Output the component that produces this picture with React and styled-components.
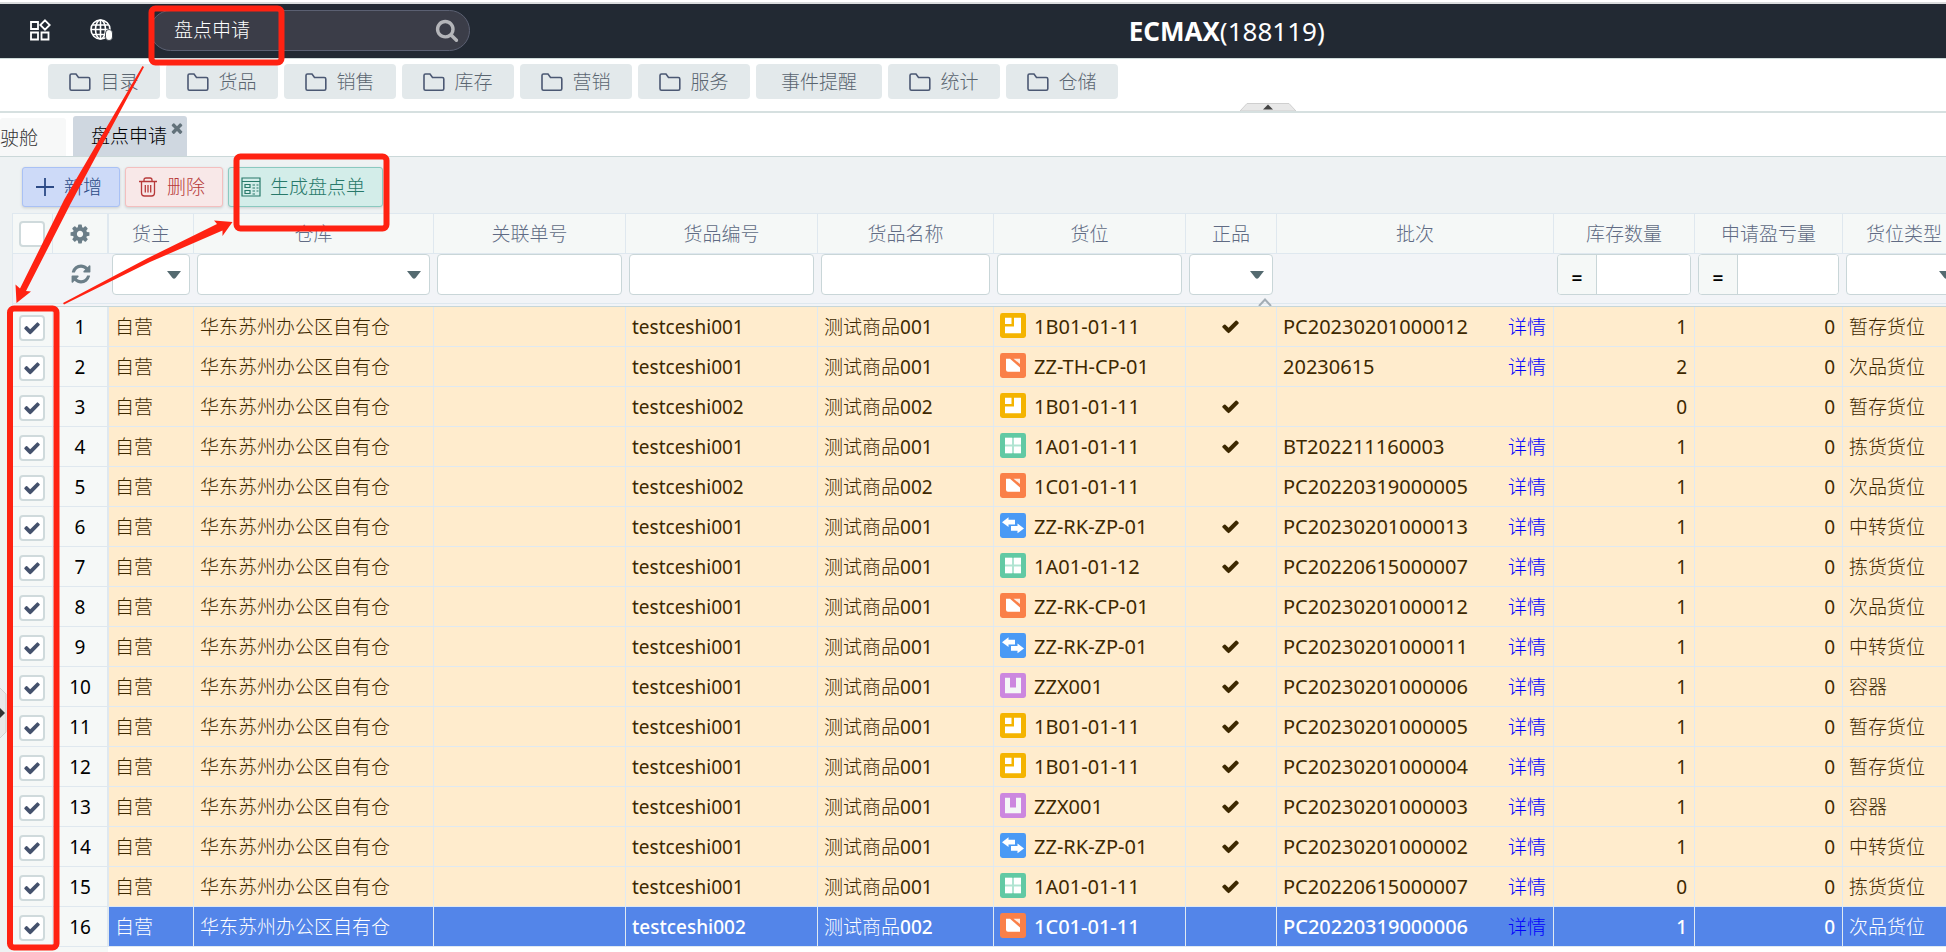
import React, { useState } from "react";
import styled, { createGlobalStyle } from "styled-components";

const paths = {
  check:
    "M1671 566q0 40-28 68l-724 724-136 136q-28 28-68 28t-68-28l-136-136-362-362q-28-28-28-68t28-68l136-136q28-28 68-28t68 28l294 295 656-657q28-28 68-28t68 28l136 136q28 28 28 68z",
  cog: "M1152 896q0-106-75-181t-181-75-181 75-75 181 75 181 181 75 181-75 75-181zm512-109v222q0 12-8 23t-20 13l-185 28q-19 54-39 91 35 50 107 138 10 12 10 25t-9 23q-27 37-99 108t-94 71q-12 0-26-9l-138-108q-44 23-91 38-16 136-29 186-7 28-36 28h-222q-14 0-24.5-8.5t-11.5-21.5l-28-184q-49-16-90-37l-141 107q-10 9-25 9-14 0-25-11-126-114-165-168-7-10-7-23 0-12 8-23 15-21 51-66.5t54-70.5q-27-50-41-99l-183-27q-13-2-21-12.5t-8-23.5v-222q0-12 8-23t19-13l186-28q14-46 39-92-40-57-107-138-10-12-10-24 0-10 9-23 26-36 98.5-107.5t94.5-71.5q13 0 26 10l138 107q44-23 91-38 16-136 29-186 7-28 36-28h222q14 0 24.5 8.5t11.5 21.5l28 184q49 16 90 37l142-107q9-9 24-9 13 0 25 10 129 119 165 170 7 8 7 22 0 12-8 23-15 21-51 66.5t-54 70.5q26 50 41 98l183 28q13 2 21 12.5t8 23.5z",
  refresh:
    "M1639 1056q0 5-1 7-64 268-268 434.5t-478 166.5q-146 0-282.5-55t-243.5-157l-129 129q-19 19-45 19t-45-19-19-45v-448q0-26 19-45t45-19h448q26 0 45 19t19 45-19 45l-137 137q71 66 161 102t187 36q134 0 250-65t186-179q11-17 53-117 8-23 30-23h192q13 0 22.5 9.5t9.5 22.5zm25-800v448q0 26-19 45t-45 19h-448q-26 0-45-19t-19-45 19-45l138-138q-148-137-349-137-134 0-250 65t-186 179q-11 17-53 117-8 23-30 23h-199q-13 0-22.5-9.5t-9.5-22.5v-7q65-268 270-434.5t480-166.5q146 0 284 55.5t245 156.5l130-129q19-19 45-19t45 19 19 45z",
  search:
    "M1216 832q0-185-131.5-316.5t-316.5-131.5-316.5 131.5-131.5 316.5 131.5 316.5 316.5 131.5 316.5-131.5 131.5-316.5zm512 832q0 52-38 90t-90 38q-54 0-90-38l-343-342q-179 124-399 124-143 0-273.5-55.5t-225-150-150-225-55.5-273.5 55.5-273.5 150-225 225-150 273.5-55.5 273.5 55.5 225 150 150 225 55.5 273.5q0 220-124 399l343 343q37 37 37 90z",
  times:
    "M1490 1322q0 40-28 68l-136 136q-28 28-68 28t-68-28l-294-294-294 294q-28 28-68 28t-68-28l-136-136q-28-28-28-68t28-68l294-294-294-294q-28-28-28-68t28-68l136-136q28-28 68-28t68 28l294 294 294-294q28-28 68-28t68 28l136 136q28 28 28 68t-28 68l-294 294 294 294q28 28 28 68z",
};

const Fa = ({ name, size }) => (
  <svg width={size} height={size} viewBox="0 0 1792 1792" fill="currentColor">
    <path d={paths[name]} />
  </svg>
);

const menus = ["目录", "货品", "销售", "库存", "营销", "服务", "事件提醒", "统计", "仓储"];

const columns = [
  { title: "货主", width: 85, filter: "select" },
  { title: "仓库", width: 240, filter: "select" },
  { title: "关联单号", width: 192, filter: "text" },
  { title: "货品编号", width: 192, filter: "text" },
  { title: "货品名称", width: 176, filter: "text" },
  { title: "货位", width: 192, filter: "text" },
  { title: "正品", width: 91, filter: "select", sorted: true },
  { title: "批次", width: 277 },
  { title: "库存数量", width: 141, filter: "number" },
  { title: "申请盈亏量", width: 148, filter: "number" },
  { title: "货位类型", width: 123, filter: "select" },
];

// [item, location, kind, genuine, batch, stock]
const rows = [
  ["001", "1B01-01-11", "temp", true, "PC20230201000012", 1],
  ["001", "ZZ-TH-CP-01", "bad", false, "20230615", 2],
  ["002", "1B01-01-11", "temp", true, "", 0],
  ["001", "1A01-01-11", "pick", true, "BT202211160003", 1],
  ["002", "1C01-01-11", "bad", false, "PC20220319000005", 1],
  ["001", "ZZ-RK-ZP-01", "transfer", true, "PC20230201000013", 1],
  ["001", "1A01-01-12", "pick", true, "PC20220615000007", 1],
  ["001", "ZZ-RK-CP-01", "bad", false, "PC20230201000012", 1],
  ["001", "ZZ-RK-ZP-01", "transfer", true, "PC20230201000011", 1],
  ["001", "ZZX001", "box", true, "PC20230201000006", 1],
  ["001", "1B01-01-11", "temp", true, "PC20230201000005", 1],
  ["001", "1B01-01-11", "temp", true, "PC20230201000004", 1],
  ["001", "ZZX001", "box", true, "PC20230201000003", 1],
  ["001", "ZZ-RK-ZP-01", "transfer", true, "PC20230201000002", 1],
  ["001", "1A01-01-11", "pick", true, "PC20220615000007", 0],
  ["002", "1C01-01-11", "bad", false, "PC20220319000006", 1],
];

const kinds = {
  temp: {
    label: "暂存货位",
    color: "#f4b400",
    shape: <path fill="#fff" d="M5 5h6.500v6.500H5zM14 5h7v16H5v-7h9z" />,
  },
  bad: {
    label: "次品货位",
    color: "#fa8048",
    shape: (
      <>
        <path fill="#fff" d="M6 6h4l10 9v4.500H8q-2 0-2-2z" />
        <path fill="#fff" fillOpacity="0.850" d="M13.500 6H20v5.500z" />
      </>
    ),
  },
  pick: {
    label: "拣货货位",
    color: "#62c9a4",
    shape: (
      <>
        <path fill="#fff" fillOpacity="0.500" d="M5 5h16v16H5z" />
        <path fill="#fff" d="M5 5h7v7H5zM14 5h7v7h-7zM5 14h7v7H5zM14 14h7v7h-7z" />
      </>
    ),
  },
  transfer: {
    label: "中转货位",
    color: "#4a9af5",
    shape: (
      <path
        fill="#fff"
        d="M2 9.500L8.500 4.500V7H15v5H8.500v2.500zM24 16l-6.500 5v-2.500H11v-5h6.500V11z"
      />
    ),
  },
  box: {
    label: "容器",
    color: "#cc87df",
    shape: <path fill="#f5f7f7" d="M5 5h5v10h6V5h5v16H5z" />,
  },
};

const FolderIcon = () => (
  <svg width="22" height="20" viewBox="0 0 22 20" fill="none" stroke="#4b5873" strokeWidth="1.600">
    <path d="M1 3.500Q1 2 2.500 2H7l2.500 3.500h9.800q1.500 0 1.500 1.500v9.800q0 1.500-1.500 1.500H2.500Q1 18.300 1 16.800z" />
  </svg>
);

const GridIcon = () => (
  <svg width="24" height="22" viewBox="0 0 24 22" fill="none" stroke="#fff" strokeWidth="1.800">
    <path d="M3 3h7v7H3zM3 13.500h7v7H3zM13.500 13.500h7v7h-7zM17 1.300l4.700 4.700-4.700 4.700L12.300 6z" />
  </svg>
);

const GlobeIcon = () => (
  <svg width="24" height="24" viewBox="0 0 24 24" fill="none" stroke="#fff" strokeWidth="1.600">
    <circle cx="11.500" cy="11.500" r="9.500" />
    <ellipse cx="11.500" cy="11.500" rx="5" ry="9.500" />
    <path d="M11.500 2v19M2 11.500h19M3.500 7h16M3.500 16.500h13" />
    <rect x="16.500" y="11.500" width="7" height="11" rx="3.500" fill="#fff" stroke="#222933" strokeWidth="0.800" />
  </svg>
);

const PlusIcon = () => (
  <svg width="20" height="20" viewBox="0 0 20 20" stroke="currentColor" strokeWidth="1.800">
    <path d="M10 1v18M1 10h18" />
  </svg>
);

const TrashIcon = () => (
  <svg width="20" height="20" viewBox="0 0 20 20" fill="none" stroke="currentColor" strokeWidth="1.300">
    <path d="M1 4.500h18M6 4V3q0-2 2-2h4q2 0 2 2v1M3.500 4.500V16q0 3 3 3h7q3 0 3-3V4.500M7.300 8v7.500M10 8v7.500M12.700 8v7.500" />
  </svg>
);

const SheetIcon = () => (
  <svg width="20" height="20" viewBox="0 0 20 20" fill="none" stroke="currentColor" strokeWidth="1.200">
    <path d="M1 1h18v18H1zM1 4.500h18M4 7.500h5v3H4zM4 13.500h5v3H4zM11.500 8H14M11.500 11H14M11.500 14H14M11.500 17H14M15.500 8h2M15.500 11h2M15.500 14h2" />
  </svg>
);

const KindIcon = ({ kind }) => (
  <svg width="26" height="25" viewBox="0 0 26 26" preserveAspectRatio="none">
    <rect width="26" height="26" rx="2.500" fill={kinds[kind].color} />
    {kinds[kind].shape}
  </svg>
);

const Filter = ({ type, title }) => {
  if (type === "select") {
    return (
      <SelectBox>
        <select aria-label={title} defaultValue="">
          <option value="" />
        </select>
        <svg width="14" height="8" viewBox="0 0 14 8" fill="#546a70">
          <path d="M0 0h14L8.500 7q-1.500 1.500-3 0z" />
        </svg>
      </SelectBox>
    );
  }
  if (type === "number") {
    return (
      <NumberBox>
        <button type="button">=</button>
        <input aria-label={title} type="text" />
      </NumberBox>
    );
  }
  if (type === "text") return <TextInput aria-label={title} type="text" />;
  return null;
};

const Check = ({ label, checked, onChange }) => (
  <CheckLabel>
    <input type="checkbox" aria-label={label} checked={checked} onChange={onChange} />
    {checked && <Fa name="check" size={18} />}
  </CheckLabel>
);

const Marks = () => (
  <MarkLayer width="400" height="952" viewBox="0 0 400 952">
    <g fill="none" stroke="#ff2212" strokeWidth="6">
      <rect x="151.500" y="8.500" width="130" height="54" rx="4" />
      <rect x="236.500" y="156.500" width="150" height="72" rx="4" />
      <rect x="10" y="308.500" width="46.500" height="639" rx="4" />
    </g>
    <g fill="#ff2212">
      <path d="M142.500 66l1.500 1L71 203 26 291l5 0.500L16.500 303 15.500 284.500l4.500 4L64 200z" />
      <path d="M63 303l84-44.500 70-34.500-3-3.500 18.500 1.500-10 14v-5.500L150 262 64 304.500z" />
    </g>
  </MarkLayer>
);

const App = () => {
  const [picked, setPicked] = useState(rows.map(() => true));

  const toggle = (index) => {
    setPicked(picked.map((value, i) => (i === index ? !value : value)));
  };

  return (
    <Page>
      <GlobalStyle />
      <TopBar>
        <IconButton aria-label="应用">
          <GridIcon />
        </IconButton>
        <IconButton aria-label="语言">
          <GlobeIcon />
        </IconButton>
        <SearchBox>
          <input aria-label="搜索" defaultValue="盘点申请" />
          <Fa name="search" size={24} />
        </SearchBox>
        <Brand>
          <b>ECMAX</b>(188119)
        </Brand>
      </TopBar>

      <MenuBar>
        {menus.map((name) => (
          <MenuButton key={name} $wide={name.length > 2}>
            {name.length === 2 && <FolderIcon />}
            {name}
          </MenuButton>
        ))}
        <TopHandle width="56" height="8" viewBox="0 0 56 8">
          <path d="M0 8L7 0.500h42L56 8z" fill="#e8e8e8" stroke="#cfcfcf" />
          <path d="M23 6.500L28 1.500l5 5z" fill="#444" />
        </TopHandle>
      </MenuBar>

      <TabBar>
        <Tab href="#home">驶舱</Tab>
        <Tab href="#apply" $active>
          盘点申请
          <Fa name="times" size={16} />
        </Tab>
      </TabBar>

      <Content>
        <Toolbar>
          <ToolButton $color="#2c4a86" $bg="#cddaf8" $line="#a9c1f5">
            <PlusIcon />
            新增
          </ToolButton>
          <ToolButton $color="#b73a3a" $bg="#f8e8e8" $line="#f3bfbf">
            <TrashIcon />
            删除
          </ToolButton>
          <ToolButton $color="#28796a" $bg="#d3ede9" $line="#8ac9c0">
            <SheetIcon />
            生成盘点单
          </ToolButton>
        </Toolbar>

        <Grid>
          <colgroup>
            <Col $width={41} />
            <Col $width={56} />
            {columns.map((col) => (
              <Col key={col.title} $width={col.width} />
            ))}
          </colgroup>
          <thead>
            <tr>
              <HeadCell $first>
                <Check
                  label="全选"
                  checked={false}
                  onChange={() => setPicked(rows.map(() => true))}
                />
              </HeadCell>
              <HeadCell $fixedEnd>
                <GridButton aria-label="设置">
                  <Fa name="cog" size={22} />
                </GridButton>
              </HeadCell>
              {columns.map((col) => (
                <HeadCell key={col.title}>{col.title}</HeadCell>
              ))}
            </tr>
            <tr>
              <FilterCell $first>
                <FilterInner />
              </FilterCell>
              <FilterCell>
                <FilterInner>
                  <GridButton aria-label="刷新">
                    <Fa name="refresh" size={22} />
                  </GridButton>
                </FilterInner>
              </FilterCell>
              {columns.map((col) => (
                <FilterCell key={col.title}>
                  <FilterInner>
                    <Filter type={col.filter} title={col.title} />
                    {col.sorted && (
                      <SortMark width="14" height="8" viewBox="0 0 14 8">
                        <path d="M1 8l6-6.500L13 8" fill="none" stroke="#a3adb5" strokeWidth="2" />
                      </SortMark>
                    )}
                  </FilterInner>
                </FilterCell>
              ))}
            </tr>
          </thead>
          <tbody>
            {rows.map(([item, place, kind, genuine, batch, stock], index) => (
              <Row key={index} $current={index === rows.length - 1}>
                <FixedCell $first>
                  <Check
                    label={`${index + 1}`}
                    checked={picked[index]}
                    onChange={() => toggle(index)}
                  />
                </FixedCell>
                <FixedCell $fixedEnd>{index + 1}</FixedCell>
                <Cell>自营</Cell>
                <Cell>华东苏州办公区自有仓</Cell>
                <Cell />
                <Cell>testceshi{item}</Cell>
                <Cell>测试商品{item}</Cell>
                <Cell $large>
                  <Place>
                    <KindIcon kind={kind} />
                    {place}
                  </Place>
                </Cell>
                <Cell $align="center">{genuine && <Fa name="check" size={19} />}</Cell>
                <Cell $large>
                  {batch && (
                    <Batch>
                      {batch}
                      <a href="#detail">详情</a>
                    </Batch>
                  )}
                </Cell>
                <Cell $align="right">{stock}</Cell>
                <Cell $align="right">0</Cell>
                <Cell>{kinds[kind].label}</Cell>
              </Row>
            ))}
          </tbody>
        </Grid>
        <Rest />
      </Content>

      <SideHandle width="7" height="52" viewBox="0 0 7 52">
        <path d="M-1 0L6 7v38l-7 7z" fill="#e8e8e8" stroke="#d0d0d0" />
        <path d="M0 21l5 5-5 5z" fill="#333" />
      </SideHandle>
      <Marks />
    </Page>
  );
};

const GlobalStyle = createGlobalStyle`
  * {
    box-sizing: border-box;
  }

  body {
    margin: 0;
    background: #fff;
    overflow: hidden;
  }

  body, button, input, select {
    font-family: "Noto Sans", "Noto Sans CJK SC Light", "Noto Sans CJK SC", sans-serif;
    font-size: 19px;
    line-height: 24px;
  }

  svg {
    display: block;
    flex: none;
  }
`;

const Page = styled.div`
  position: relative;
  height: 100vh;
  display: flex;
  flex-direction: column;
  overflow: hidden;
  padding-top: 2px;
`;

const TopBar = styled.header`
  position: relative;
  flex: none;
  display: flex;
  align-items: center;
  height: 57px;
  padding: 0 30px 2px 28px;
  border-top: 2px solid #dadcdd;
  border-bottom: 1px solid #cfdbdb;
  background: #222933;
`;

const IconButton = styled.button`
  width: 24px;
  margin-right: 37px;
  padding: 0;
  border: 0;
  background: none;
`;

const SearchBox = styled.div`
  display: flex;
  align-items: center;
  width: 320px;
  height: 41px;
  padding: 0 10px 0 23px;
  border: 1px solid #5b6072;
  border-radius: 21px;
  background: #3b3d48;
  color: #b4b5b9;

  input {
    flex: 1;
    min-width: 0;
    padding: 0;
    border: 0;
    outline: 0;
    background: none;
    color: #fff;
  }
`;

const Brand = styled.div`
  position: absolute;
  left: 58%;
  top: 10px;
  color: #fff;
  font-size: 26px;
  line-height: 34px;
`;

const MenuBar = styled.nav`
  position: relative;
  flex: none;
  display: flex;
  gap: 6px;
  height: 54px;
  padding: 5px 48px;
  border-bottom: 2px solid #d6e0e0;
`;

const MenuButton = styled.button`
  display: flex;
  align-items: center;
  justify-content: center;
  gap: 9px;
  width: ${({ $wide }) => ($wide ? 126 : 112)}px;
  height: 35px;
  padding: 0;
  border: 0;
  border-radius: 4px;
  background: #e3e9eb;
  color: #5a6570;
`;

const TopHandle = styled.svg`
  position: absolute;
  left: 1240px;
  bottom: 0;
`;

const SideHandle = styled.svg`
  position: absolute;
  left: 0;
  top: 687px;
`;

const TabBar = styled.div`
  flex: none;
  display: flex;
  align-items: flex-end;
  gap: 7px;
  height: 44px;
  border-bottom: 1px solid #cbd8d9;
`;

const Tab = styled.a`
  position: relative;
  height: ${({ $active }) => ($active ? 40 : 38)}px;
  padding: ${({ $active }) => ($active ? "8px 20px 8px 18px" : "8px 28px 8px 0")};
  border-radius: 3px 3px 0 0;
  background: ${({ $active }) => ($active ? "#cfd7e0" : "#f7f8f8")};
  color: ${({ $active }) => ($active ? "#000" : "#333")};
  text-decoration: none;

  svg {
    position: absolute;
    right: 2px;
    top: 4px;
    color: #62717a;
  }
`;

const Content = styled.main`
  flex: 1;
  display: flex;
  flex-direction: column;
  padding-left: 12px;
  background: #eef2f3;
`;

const Toolbar = styled.div`
  display: flex;
  gap: 5px;
  padding: 10px 10px 6px;
`;

const ToolButton = styled.button`
  display: flex;
  align-items: center;
  gap: 9px;
  height: 40px;
  padding: 0 17px 0 12px;
  border: 1px solid ${({ $line }) => $line};
  border-radius: 3px;
  background: ${({ $bg }) => $bg};
  color: ${({ $color }) => $color};
  box-shadow: 0 1px 3px rgba(0, 0, 0, 0.15);
`;

const Grid = styled.table`
  width: 100%;
  table-layout: fixed;
  border-collapse: separate;
  border-spacing: 0;
`;

const Col = styled.col`
  width: ${({ $width }) => $width}px;
`;

const HeadCell = styled.th`
  height: 41px;
  padding: ${({ $first }) => ($first ? "0 2px 0 0" : "0")};
  border: 1px solid #dfe8ef;
  border-left-width: ${({ $first }) => ($first ? 1 : 0)}px;
  border-right-width: ${({ $fixedEnd }) => ($fixedEnd ? 2 : 1)}px;
  background: #f5f8f7;
  color: #606b84;
  font-weight: 400;
  white-space: nowrap;
`;

const FilterCell = styled.td`
  height: 53px;
  padding: 0 0 2px;
  border-left: ${({ $first }) => ($first ? 1 : 0)}px solid #dfe8ef;
  border-bottom: 1px solid #c6d6d9;
  background: #f2f4f7;
  vertical-align: top;
`;

const FilterInner = styled.div`
  position: relative;
  height: 50px;
  padding: 0 4px 0 3px;
  border-bottom: 1px solid #dfe8ef;
`;

const SortMark = styled.svg`
  position: absolute;
  right: 5px;
  bottom: -3px;
`;

const TextInput = styled.input`
  width: 100%;
  height: 41px;
  padding: 0 8px;
  border: 1px solid #c9d6d8;
  border-radius: 4px;
  background: #fff;
`;

const SelectBox = styled.div`
  position: relative;

  select {
    display: block;
    appearance: none;
    width: 100%;
    height: 41px;
    border: 1px solid #c9d6d8;
    border-radius: 4px;
    background: #fff;
  }

  svg {
    position: absolute;
    right: 9px;
    top: 17px;
    pointer-events: none;
  }
`;

const NumberBox = styled.div`
  display: flex;
  height: 41px;
  border: 1px solid #c9d6d8;
  border-radius: 4px;
  background: #fff;
  overflow: hidden;

  button {
    width: 39px;
    padding: 6px 0 0;
    border: 0;
    border-right: 1px solid #c9d6d8;
    background: #f5f8f7;
    color: #000;
    font-weight: 600;
  }

  input {
    flex: 1;
    min-width: 0;
    border: 0;
  }
`;

const GridButton = styled.button`
  display: flex;
  align-items: center;
  justify-content: center;
  width: 100%;
  height: 39px;
  padding: 0;
  border: 0;
  background: none;
  color: #6b7e88;
`;

const CheckLabel = styled.label`
  position: relative;
  display: block;
  width: 26px;
  height: 26px;
  margin: 0 auto;

  input {
    display: block;
    appearance: none;
    width: 26px;
    height: 26px;
    margin: 0;
    border: 2px solid #cfdadc;
    border-radius: 4px;
    background: #fff;
  }

  svg {
    position: absolute;
    left: 4px;
    top: 4px;
    color: #44516c;
  }
`;

const FixedCell = styled.td`
  height: 40px;
  padding: ${({ $first }) => ($first ? "2px 2px 0 0" : "0")};
  border: 1px solid #dfe8ef;
  border-top: 0;
  border-left-width: ${({ $first }) => ($first ? 1 : 0)}px;
  border-right-width: ${({ $fixedEnd }) => ($fixedEnd ? 2 : 1)}px;
  background: #f5f8f7;
  color: #000;
  font-weight: 400;
  text-align: center;
`;

const Cell = styled.td`
  height: 40px;
  padding: 0 7px 0 6px;
  border-right: 1px solid #dfe9f2;
  border-bottom: 1px solid #dfe9f2;
  font-size: ${({ $large }) => ($large ? 20 : 19)}px;
  text-align: ${({ $align }) => $align || "left"};
  white-space: nowrap;

  svg {
    margin: 0 auto;
  }
`;

const Row = styled.tr`
  background: ${({ $current }) => ($current ? "#5385e9" : "#ffeccd")};
  color: ${({ $current }) => ($current ? "#fff" : "#3d2800")};
  font-weight: ${({ $current }) => ($current ? 500 : 400)};
`;

const Place = styled.div`
  display: flex;
  align-items: center;
  gap: 8px;

  svg {
    margin: 0 0 2px;
  }
`;

const Batch = styled.div`
  display: flex;
  justify-content: space-between;

  a {
    color: #0000ff;
    font-size: 19px;
    font-weight: 400;
    text-decoration: none;
  }
`;

const Rest = styled.div`
  flex: 1;
  background: linear-gradient(90deg, #f5f8f7 96px, #fff 96px);
`;

const MarkLayer = styled.svg`
  position: absolute;
  left: 0;
  top: 0;
  pointer-events: none;
`;

export default App;
